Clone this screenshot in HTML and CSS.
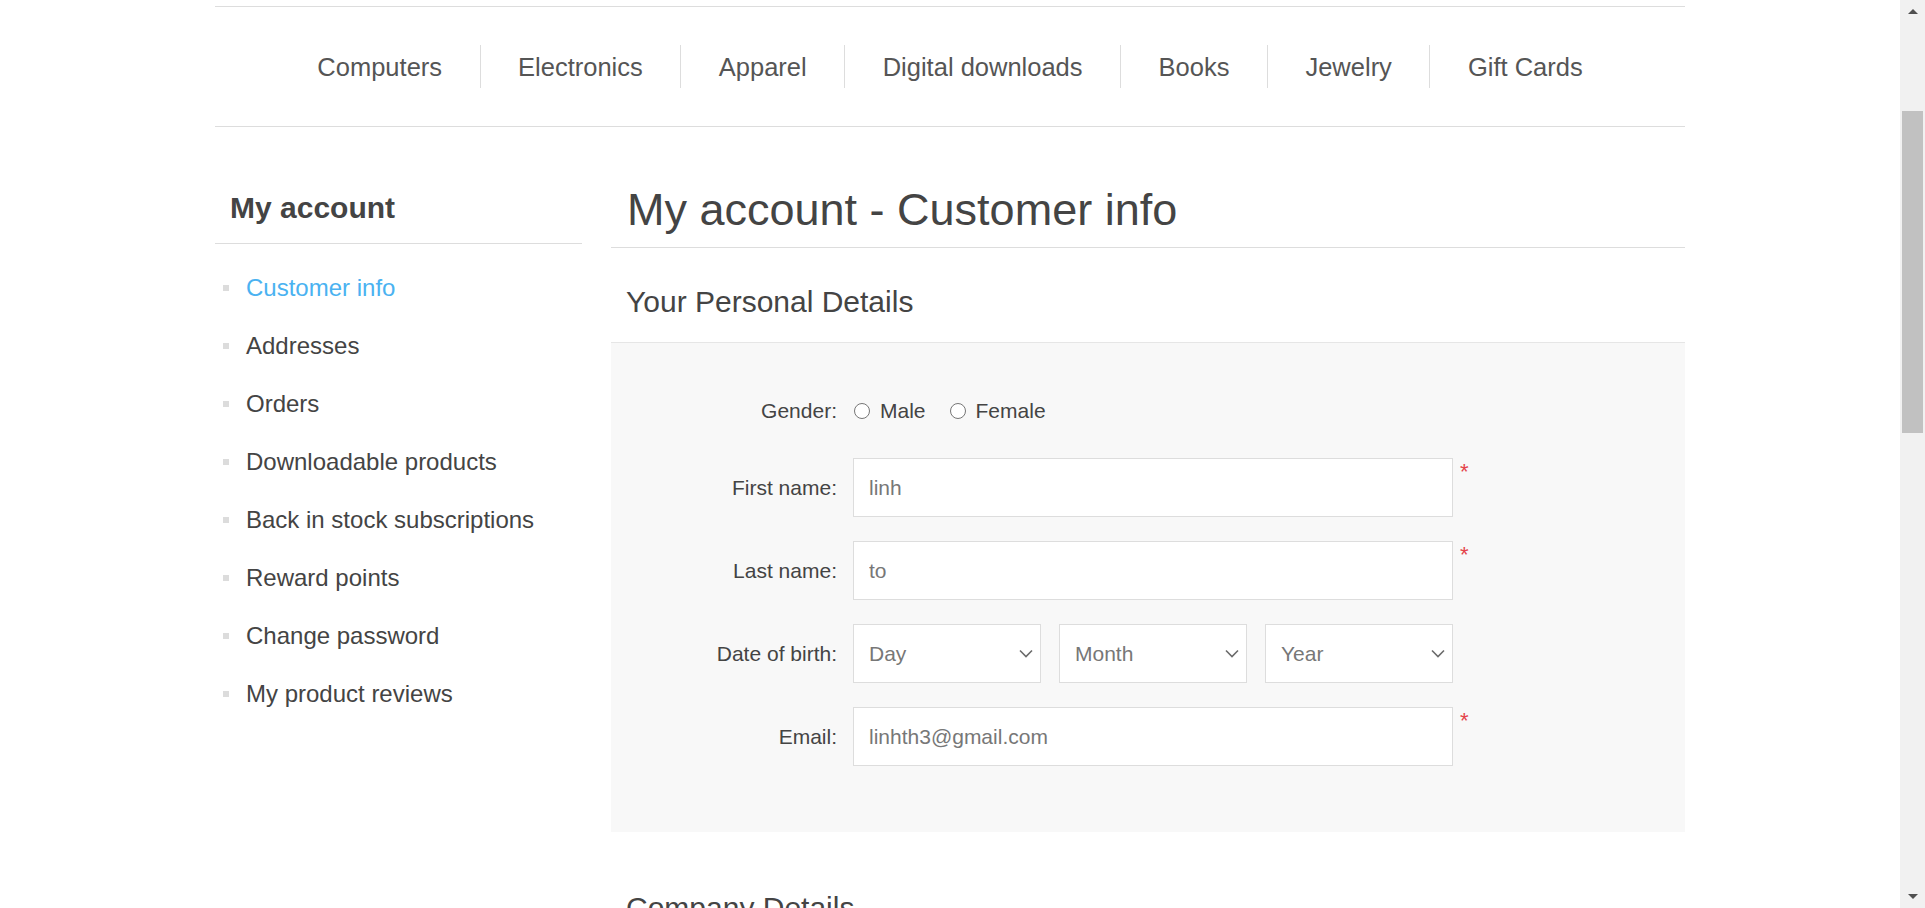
FILE: index.html
```html
<!DOCTYPE html>
<html lang="en">
<head>
<meta charset="utf-8">
<title>My account - Customer info</title>
<link rel="stylesheet" href="styles.css">
</head>
<body>
<div class="window">
  <div class="viewport">
    <div class="master">
      <nav class="header-menu">
        <ul class="top-menu">
          <li><a href="#">Computers</a></li>
          <li><a href="#">Electronics</a></li>
          <li><a href="#">Apparel</a></li>
          <li><a href="#">Digital downloads</a></li>
          <li><a href="#">Books</a></li>
          <li><a href="#">Jewelry</a></li>
          <li><a href="#">Gift Cards</a></li>
        </ul>
      </nav>
      <div class="columns">
        <aside class="side">
          <div class="block-title">My account</div>
          <ul class="side-list">
            <li class="active"><a href="#">Customer info</a></li>
            <li><a href="#">Addresses</a></li>
            <li><a href="#">Orders</a></li>
            <li><a href="#">Downloadable products</a></li>
            <li><a href="#">Back in stock subscriptions</a></li>
            <li><a href="#">Reward points</a></li>
            <li><a href="#">Change password</a></li>
            <li><a href="#">My product reviews</a></li>
          </ul>
        </aside>
        <main class="center">
          <div class="page-title"><h1>My account - Customer info</h1></div>
          <div class="fieldset">
            <div class="fieldset-title">Your Personal Details</div>
            <div class="form-fields">
              <div class="inputs gender-row">
                <label class="field-label">Gender:</label>
                <span class="gender">
                  <input type="radio" name="gender" class="radio" id="g-m"><label for="g-m" class="radio-label">Male</label>
                  <input type="radio" name="gender" class="radio" id="g-f"><label for="g-f" class="radio-label">Female</label>
                </span>
              </div>
              <div class="inputs">
                <label class="field-label">First name:</label>
                <input type="text" class="text-box" value="linh">
                <span class="required">*</span>
              </div>
              <div class="inputs">
                <label class="field-label">Last name:</label>
                <input type="text" class="text-box" value="to">
                <span class="required">*</span>
              </div>
              <div class="inputs">
                <label class="field-label">Date of birth:</label>
                <div class="date-picker">
                  <div class="select"><span>Day</span><svg width="14" height="9" viewBox="0 0 14 9"><path d="M1 1.5 L7 7.5 L13 1.5" fill="none" stroke="#6b6b6b" stroke-width="1.6"/></svg></div>
                  <div class="select"><span>Month</span><svg width="14" height="9" viewBox="0 0 14 9"><path d="M1 1.5 L7 7.5 L13 1.5" fill="none" stroke="#6b6b6b" stroke-width="1.6"/></svg></div>
                  <div class="select"><span>Year</span><svg width="14" height="9" viewBox="0 0 14 9"><path d="M1 1.5 L7 7.5 L13 1.5" fill="none" stroke="#6b6b6b" stroke-width="1.6"/></svg></div>
                </div>
              </div>
              <div class="inputs">
                <label class="field-label">Email:</label>
                <input type="text" class="text-box" value="linhth3@gmail.com">
                <span class="required">*</span>
              </div>
            </div>
          </div>
          <div class="fieldset">
            <div class="fieldset-title next">Company Details</div>
          </div>
        </main>
      </div>
    </div>
  </div>
  <div class="scrollbar">
    <div class="sb-btn"><span class="arrow-up"></span></div>
    <div class="sb-track"><div class="sb-thumb"></div></div>
    <div class="sb-btn bottom"><span class="arrow-down"></span></div>
  </div>
</div>
</body>
</html>
```

FILE: styles.css
```css
* { box-sizing: border-box; }
html, body {
  margin: 0;
  padding: 0;
  height: 908px;
  overflow: hidden;
  background: #fff;
  font-family: "Liberation Sans", Arial, Helvetica, sans-serif;
  color: #444;
}
.window {
  display: flex;
  width: 1925px;
  height: 908px;
}
.viewport {
  flex: 1;
  height: 908px;
  overflow: hidden;
  padding-top: 6px;
}
.master {
  width: 1470px;
  margin: 0 auto;
}

/* header menu */
.header-menu {
  border-top: 1px solid #ddd;
  border-bottom: 1px solid #ddd;
  padding: 38px 0;
}
.top-menu {
  list-style: none;
  margin: 0;
  padding: 0;
  display: flex;
  justify-content: center;
}
.top-menu li {
  height: 43px;
  border-left: 1px solid #ddd;
}
.top-menu li:first-child { border-left: 0; }
.top-menu a {
  display: block;
  padding: 1px 37.5px 0;
  line-height: 42px;
  font-size: 25.5px;
  color: #555;
  text-decoration: none;
}

/* columns */
.columns {
  display: flex;
  justify-content: space-between;
  margin-top: 45px;
}
.side { width: 367px; }
.center { width: 1074px; }

.block-title {
  padding: 18px 15px;
  font-size: 30px;
  line-height: 35px;
  font-weight: bold;
  color: #444;
  border-bottom: 1px solid #ddd;
}
.side-list {
  list-style: none;
  margin: 0;
  padding: 15px 0 0 8px;
}
.side-list li {
  display: flex;
  align-items: center;
  padding: 15px 0;
  line-height: 28px;
  font-size: 24px;
}
.side-list li::before {
  content: "";
  width: 6px;
  height: 6px;
  background: #dcdcdc;
  margin-right: 17px;
  flex: none;
}
.side-list a {
  color: #444;
  text-decoration: none;
}
.side-list li.active a { color: #4ab2f1; }

/* center */
.page-title {
  padding: 9px 15px;
  border-bottom: 1px solid #ddd;
  margin-bottom: 37px;
}
.page-title h1 {
  margin: 0 0 0 1px;
  font-size: 45px;
  line-height: 57px;
  font-weight: normal;
  color: #444;
}
.fieldset-title {
  padding: 0 15px;
  font-size: 30px;
  line-height: 34px;
  color: #444;
  margin-bottom: 23px;
}
.fieldset-title.next {
  margin-top: 59px;
}
.form-fields {
  border-top: 1px solid #e6e6e6;
  background: #f8f8f8;
  padding: 45px 0 66px;
  display: flex;
  flex-direction: column;
  gap: 24px;
}
.inputs {
  display: flex;
  align-items: flex-start;
  height: 59px;
}
.inputs .field-label {
  width: 226px;
  margin-right: 16px;
  text-align: right;
  font-size: 21px;
  line-height: 59px;
  color: #444;
}
.gender-row {
  height: 45px;
  margin-bottom: 1px;
  align-items: center;
}
.gender-row .field-label { line-height: 45px; }
.gender {
  display: flex;
  align-items: center;
  font-size: 21px;
  color: #444;
}
.radio {
  appearance: none;
  -webkit-appearance: none;
  width: 16px;
  height: 16px;
  margin: 0 0 0 1px;
  border: 1px solid #767676;
  border-radius: 50%;
  background: #fff;
}
.radio-label { margin: 0 23px 0 10px; }
.text-box {
  width: 600px;
  height: 59px;
  margin: 0;
  border: 1px solid #ddd;
  background: #fff;
  padding: 0 15px;
  font-family: "Liberation Sans", Arial, sans-serif;
  font-size: 21px;
  color: #777;
  outline: none;
}
.required {
  margin: 3px 0 0 7px;
  font-size: 22px;
  line-height: 21px;
  color: #e4434b;
}
.date-picker {
  display: flex;
  gap: 18px;
  width: 600px;
}
.select {
  width: 188px;
  height: 59px;
  border: 1px solid #ddd;
  background: #fff;
  display: flex;
  align-items: center;
  justify-content: space-between;
  padding: 0 7px 0 15px;
  font-size: 21px;
  color: #777;
}
.select svg { flex: none; }

/* scrollbar */
.scrollbar {
  width: 25px;
  height: 908px;
  background: #f1f1f1;
  display: flex;
  flex-direction: column;
}
.sb-btn {
  height: 22px;
  display: flex;
  justify-content: center;
  align-items: center;
}
.sb-btn.bottom { height: 23px; }
.arrow-up {
  width: 0; height: 0;
  border-left: 5px solid transparent;
  border-right: 5px solid transparent;
  border-bottom: 5px solid #505050;
}
.arrow-down {
  width: 0; height: 0;
  border-left: 5px solid transparent;
  border-right: 5px solid transparent;
  border-top: 5px solid #505050;
}
.sb-track {
  flex: 1;
  padding: 89px 2px 0;
}
.sb-thumb {
  height: 322px;
  background: #c1c1c1;
}
```
